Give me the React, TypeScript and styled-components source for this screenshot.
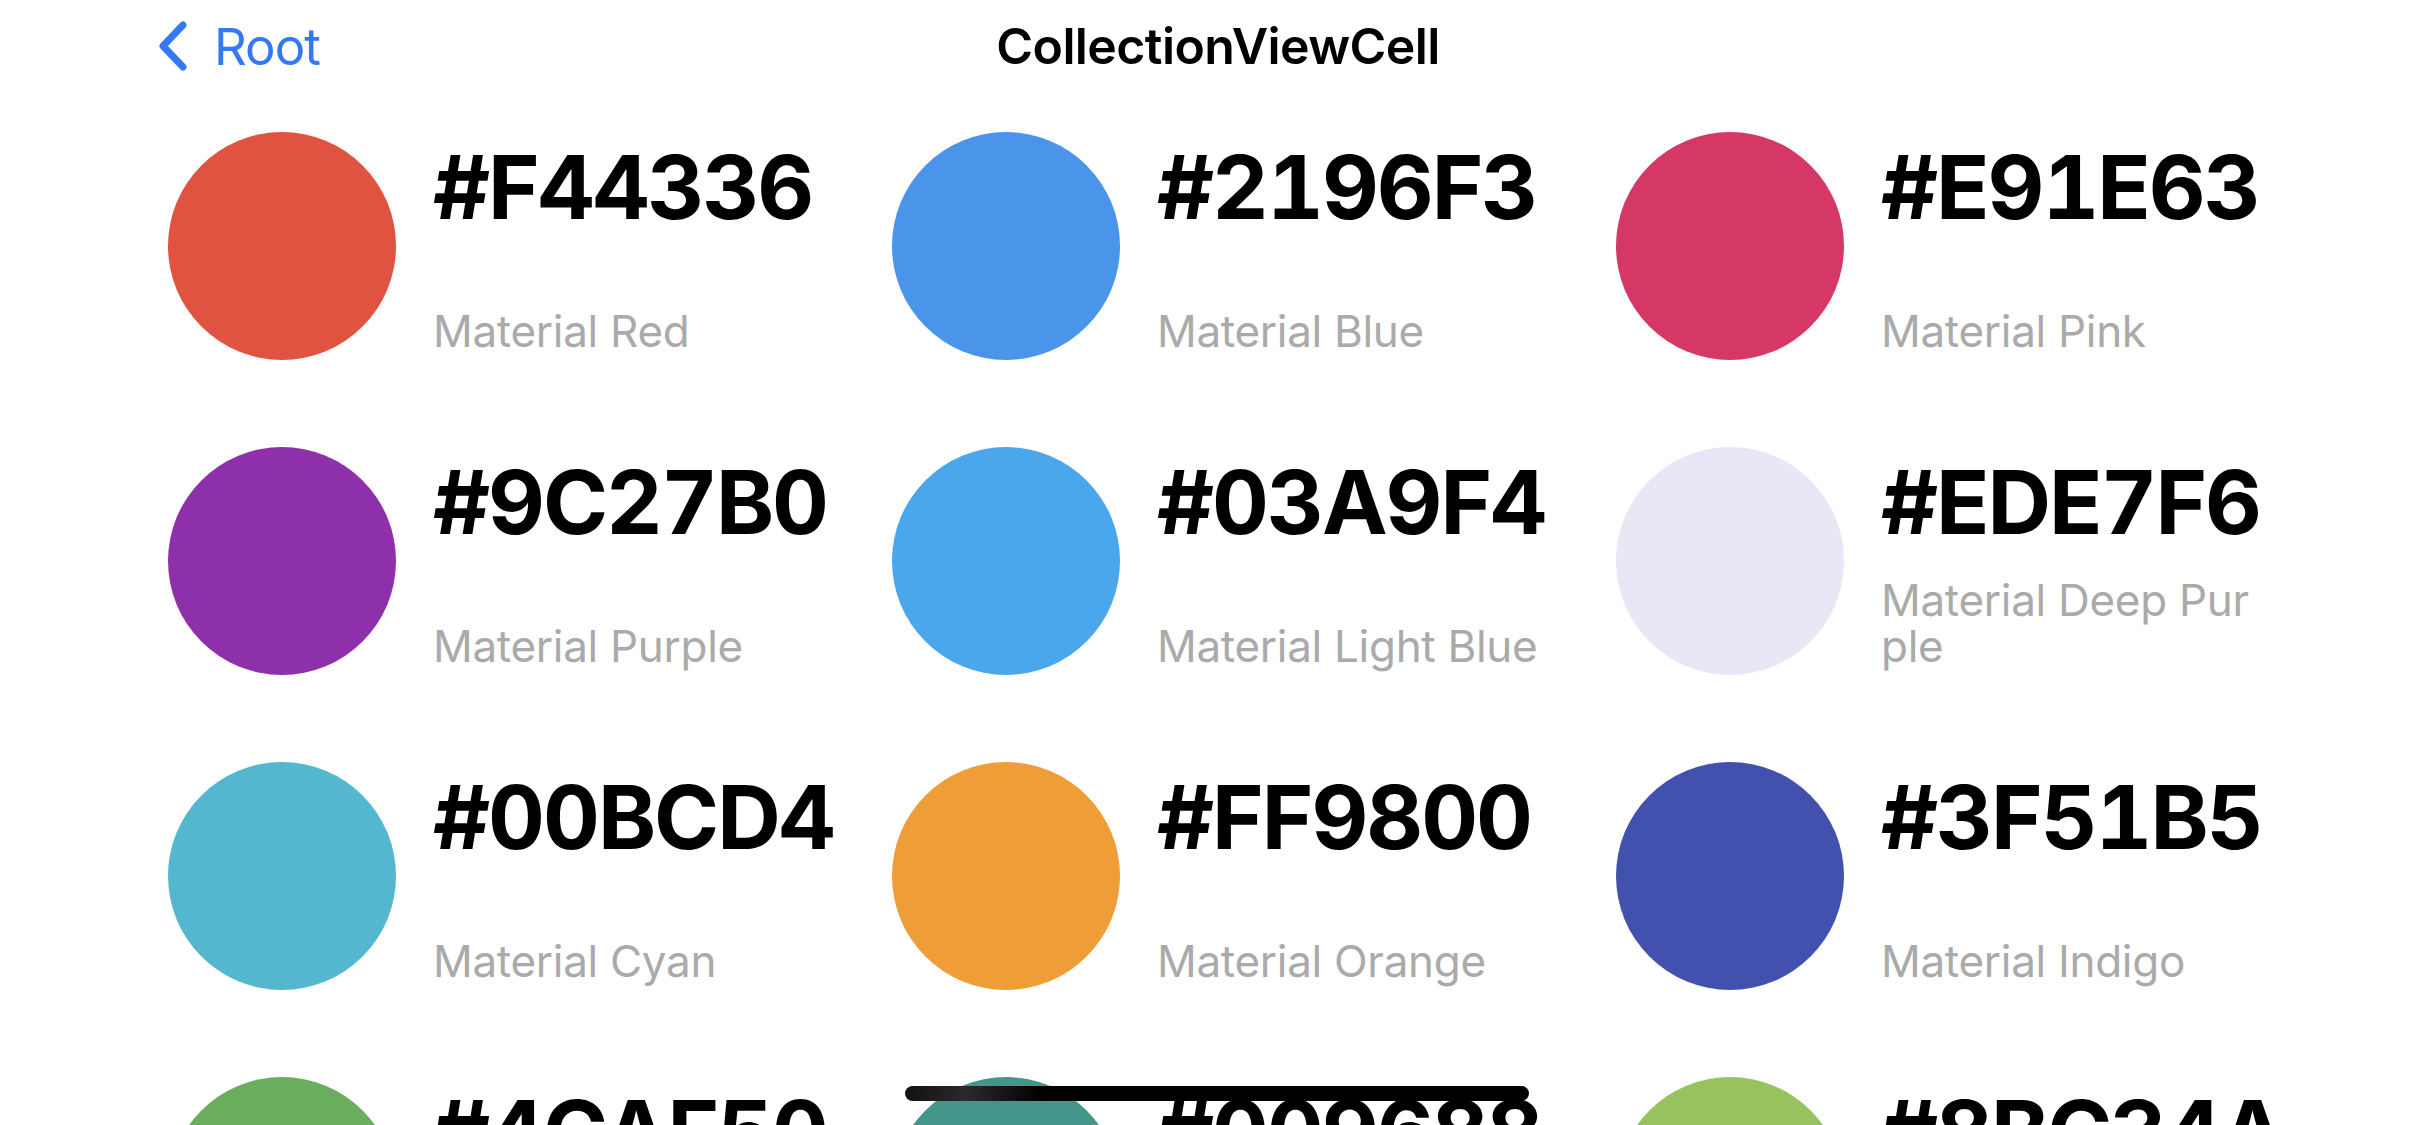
import React from 'react'
import styled, { createGlobalStyle } from 'styled-components'

const GlobalStyle = createGlobalStyle`
  html, body {
    margin: 0;
    padding: 0;
    background: #ffffff;
    overflow: hidden;
  }
  body {
    width: 2436px;
    height: 1125px;
    font-family: "Inter", "Noto Sans", sans-serif;
  }
`

type Swatch = { hex: string; name: string; shown: string }

// shown = the colour as it comes out on the display (P3 shifted)
const swatches: Swatch[] = [
  { hex: '#F44336', name: 'Material Red', shown: '#E15341' },
  { hex: '#2196F3', name: 'Material Blue', shown: '#4A95E9' },
  { hex: '#E91E63', name: 'Material Pink', shown: '#D53864' },
  { hex: '#9C27B0', name: 'Material Purple', shown: '#8D30A9' },
  { hex: '#03A9F4', name: 'Material Light Blue', shown: '#4BA7EC' },
  { hex: '#EDE7F6', name: 'Material Deep Purple', shown: '#EAE6F5' },
  { hex: '#00BCD4', name: 'Material Cyan', shown: '#55B7CF' },
  { hex: '#FF9800', name: 'Material Orange', shown: '#EF9D37' },
  { hex: '#3F51B5', name: 'Material Indigo', shown: '#4351AE' },
  { hex: '#4CAF50', name: 'Material Green', shown: '#6AAE5D' },
  { hex: '#009688', name: 'Material Teal', shown: '#44968A' },
  { hex: '#8BC34A', name: 'Material Light Green', shown: '#98C25E' },
]

const Screen = styled.div`
  position: relative;
  width: 2436px;
  height: 1125px;
  overflow: hidden;
`

const NavBar = styled.header`
  height: 92px;
  display: grid;
  grid-template-columns: 1fr auto 1fr;
  align-items: center;
`

const BackButton = styled.div`
  display: flex;
  align-items: center;
  gap: 24px;
  padding-left: 158px;
  color: #3478f6;
  font-size: 51px;
  font-weight: 400;
  letter-spacing: -1px;
`

const Title = styled.h1`
  margin: 0;
  font-size: 50px;
  font-weight: 600;
  color: #000000;
  letter-spacing: -0.6px;
`

const Grid = styled.main`
  display: grid;
  grid-template-columns: repeat(3, 645px);
  column-gap: 79px;
  row-gap: 87px;
  padding: 40px 0 0 168px;
`

const Cell = styled.div`
  display: flex;
  gap: 37px;
  height: 228px;
`

const Circle = styled.div<{ $color: string }>`
  flex: none;
  width: 228px;
  height: 228px;
  border-radius: 50%;
  background: ${(p) => p.$color};
`

const Info = styled.div`
  flex: 1;
  min-width: 0;
  display: flex;
  flex-direction: column;
`

const Hex = styled.div`
  margin-top: 11px;
  font-size: 88px;
  line-height: 1;
  font-weight: 700;
  color: #000000;
  white-space: nowrap;
  letter-spacing: -2px;
  font-variant-numeric: tabular-nums;
`

const Name = styled.div`
  flex: 1;
  display: flex;
  align-items: flex-end;
  padding-bottom: 6px;
  width: 388px;
  font-size: 44px;
  line-height: 46px;
  color: #aaaaaa;
  word-break: break-all;
  letter-spacing: -0.3px;
`

const HomeIndicator = styled.div`
  position: absolute;
  left: 905px;
  top: 1086px;
  width: 624px;
  height: 15px;
  border-radius: 8px;
  background: linear-gradient(90deg, #111 0%, #2a2a2a 10%, #000 22%, #000 100%);
`

const Chevron = () => (
  <svg width="32" height="50" viewBox="0 0 32 50">
    <path d="M25 4 L5 25 L25 46" fill="none" stroke="#3478f6" strokeWidth="7" strokeLinecap="round" strokeLinejoin="round" />
  </svg>
)

export default function App() {
  return (
    <Screen>
      <GlobalStyle />
      <NavBar>
        <BackButton>
          <Chevron />
          <span>Root</span>
        </BackButton>
        <Title>CollectionViewCell</Title>
        <div />
      </NavBar>
      <Grid>
        {swatches.map((s) => (
          <Cell key={s.hex}>
            <Circle $color={s.shown} />
            <Info>
              <Hex>{s.hex}</Hex>
              <Name>{s.name}</Name>
            </Info>
          </Cell>
        ))}
      </Grid>
      <HomeIndicator />
    </Screen>
  )
}
